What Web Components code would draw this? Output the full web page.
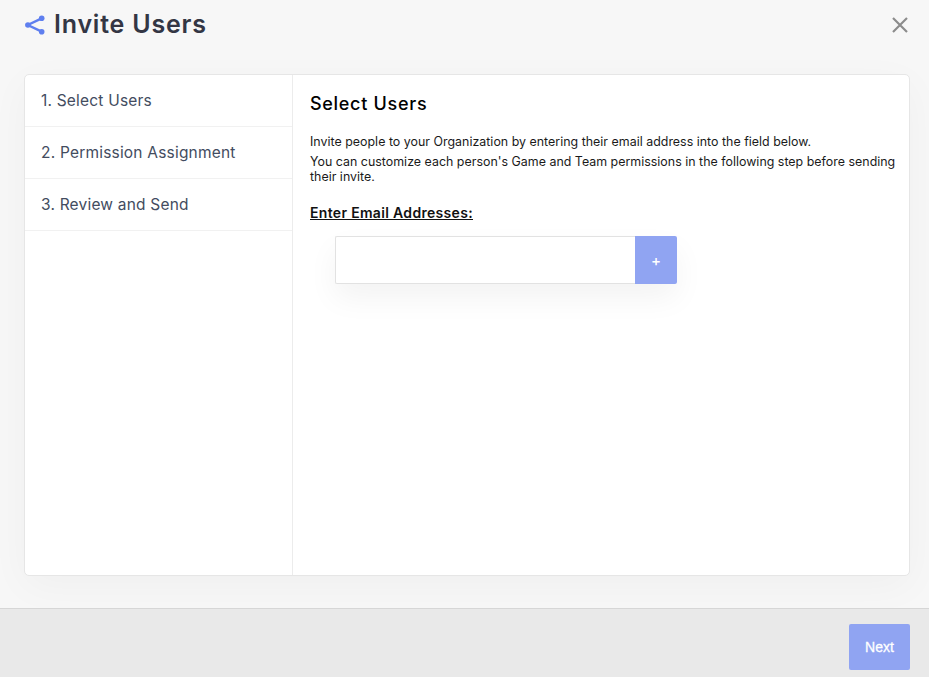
<!DOCTYPE html>
<html>
<head>
<meta charset="utf-8">
<style>
	html, body { margin: 0; height: 100%; overflow: hidden; }
	body { font-family: Inter, "Liberation Sans", sans-serif; background: #f7f7f7; }
</style>
</head>
<body>
<invite-modal>
	<step-list slot="steps">
		<step-item>1. Select Users</step-item>
		<step-item>2. Permission Assignment</step-item>
		<step-item>3. Review and Send</step-item>
	</step-list>
	<select-users slot="content"></select-users>
</invite-modal>

<script>
const modalTemplate = document.createElement('template')
modalTemplate.innerHTML = /*html*/`
<style>
	:host {
		display: flex;
		flex-direction: column;
		width: 929px;
		height: 677px;
		background: #f7f7f7;
		color: #333644;
	}
	#header {
		height: 50px;
		flex: none;
		display: flex;
		align-items: center;
		padding: 0 20px 0 25px;
		gap: 8px;
	}
	#header svg { display: block; flex: none; }
	h1 {
		flex: 1;
		margin: 0;
		font-size: 25px;
		font-weight: 600;
		line-height: 48px;
		height: 50px;
		letter-spacing: .8px;
	}
	#body {
		flex: 1;
		min-height: 0;
		padding: 24px 19px 32px 24px;
		display: flex;
	}
	#card {
		flex: 1;
		display: flex;
		background: #fff;
		border: 1px solid #e6e6e6;
		border-radius: 5px;
		box-shadow: 0 10px 40px rgba(0, 0, 0, .035);
	}
	#steps { width: 267px; flex: none; border-right: 1px solid #ececec; }
	#content { flex: 1; min-width: 0; }
	#footer {
		height: 69px;
		flex: none;
		box-sizing: border-box;
		background: #e9e9e9;
		border-top: 1px solid #d6d6d6;
		display: flex;
		justify-content: flex-end;
		align-items: flex-start;
		padding: 15px 19px 0 0;
	}
	#next {
		width: 61px;
		height: 46px;
		border: none;
		border-radius: 2px;
		background: #90a4f2;
		color: #fff;
		font: 400 14px "Liberation Sans", Arial, sans-serif;
		-webkit-text-stroke: .3px #fff;
		padding: 0;
	}
</style>
<div id="header">
	<svg width="21" height="22" viewBox="0 0 21 22" fill="#5f7fef" stroke="#5f7fef">
		<path d="M16.7 4.3 2.8 11 16.7 17.7" fill="none" stroke-width="2.4"/>
		<circle cx="16.7" cy="4.3" r="2.8" stroke="none"/>
		<circle cx="2.9" cy="11" r="2.8" stroke="none"/>
		<circle cx="16.7" cy="17.7" r="2.8" stroke="none"/>
	</svg>
	<h1>Invite Users</h1>
	<svg width="18" height="18" viewBox="0 0 18 18" stroke="#8c8c8c" stroke-width="2.2" fill="none">
		<path d="M2 2 16 16M16 2 2 16"/>
	</svg>
</div>
<div id="body">
	<div id="card">
		<div id="steps"><slot name="steps"></slot></div>
		<div id="content"><slot name="content"></slot></div>
	</div>
</div>
<div id="footer"><button id="next">Next</button></div>
`

class InviteModal extends HTMLElement {
	constructor() {
		super()
		this.attachShadow({mode: 'open'})
		this.shadowRoot.appendChild(modalTemplate.content.cloneNode(true))
	}
}

const stepListTemplate = document.createElement('template')
stepListTemplate.innerHTML = /*html*/`
<style>
	:host { display: block; }
</style>
<slot></slot>
`

class StepList extends HTMLElement {
	constructor() {
		super()
		this.attachShadow({mode: 'open'})
		this.shadowRoot.appendChild(stepListTemplate.content.cloneNode(true))
	}
}

const stepItemTemplate = document.createElement('template')
stepItemTemplate.innerHTML = /*html*/`
<style>
	:host {
		display: flex;
		align-items: center;
		box-sizing: border-box;
		height: 52px;
		padding-left: 16px;
		border-bottom: 1px solid #f1f1f1;
		color: #434c60;
		font-size: 15.5px;
		letter-spacing: .2px;
	}
</style>
<slot></slot>
`

class StepItem extends HTMLElement {
	constructor() {
		super()
		this.attachShadow({mode: 'open'})
		this.shadowRoot.appendChild(stepItemTemplate.content.cloneNode(true))
	}
}

const selectUsersTemplate = document.createElement('template')
selectUsersTemplate.innerHTML = /*html*/`
<style>
	:host {
		display: block;
		padding: 17px 10px 0 17px;
		color: #111;
	}
	h2 {
		margin: 0 0 18px;
		font-size: 18px;
		font-weight: 500;
		line-height: 24px;
		letter-spacing: .7px;
		color: #000;
	}
	p {
		margin: 0 0 5px;
		font-size: 12.4px;
		line-height: 15px;
		letter-spacing: .02px;
		color: #1a1a1a;
	}
	h3 {
		margin: 20px 0 15px;
		font-size: 14px;
		font-weight: 600;
		line-height: 17px;
		letter-spacing: .32px;
		text-decoration: underline;
	}
	#field {
		display: flex;
		width: 342px;
		height: 48px;
		margin-left: 25px;
		box-shadow: 0 14px 30px rgba(0, 0, 0, .05);
	}
	#input {
		flex: 1;
		background: #fff;
		border: 1px solid #e2e2e2;
		border-right: none;
		border-radius: 2px 0 0 2px;
	}
	#add {
		width: 42px;
		display: flex;
		align-items: center;
		justify-content: center;
		background: #90a4f2;
		color: #fff;
		font-size: 15px;
		font-weight: 500;
		border-radius: 0 2px 2px 0;
	}
</style>
<h2>Select Users</h2>
<p>Invite people to your Organization by entering their email address into the field below.</p>
<p>You can customize each person's Game and Team permissions in the following step before sending their invite.</p>
<h3>Enter Email Addresses:</h3>
<div id="field">
	<div id="input"></div>
	<div id="add">+</div>
</div>
`

class SelectUsers extends HTMLElement {
	constructor() {
		super()
		this.attachShadow({mode: 'open'})
		this.shadowRoot.appendChild(selectUsersTemplate.content.cloneNode(true))
	}
}

customElements.define('invite-modal', InviteModal)
customElements.define('step-list', StepList)
customElements.define('step-item', StepItem)
customElements.define('select-users', SelectUsers)
</script>
</body>
</html>
